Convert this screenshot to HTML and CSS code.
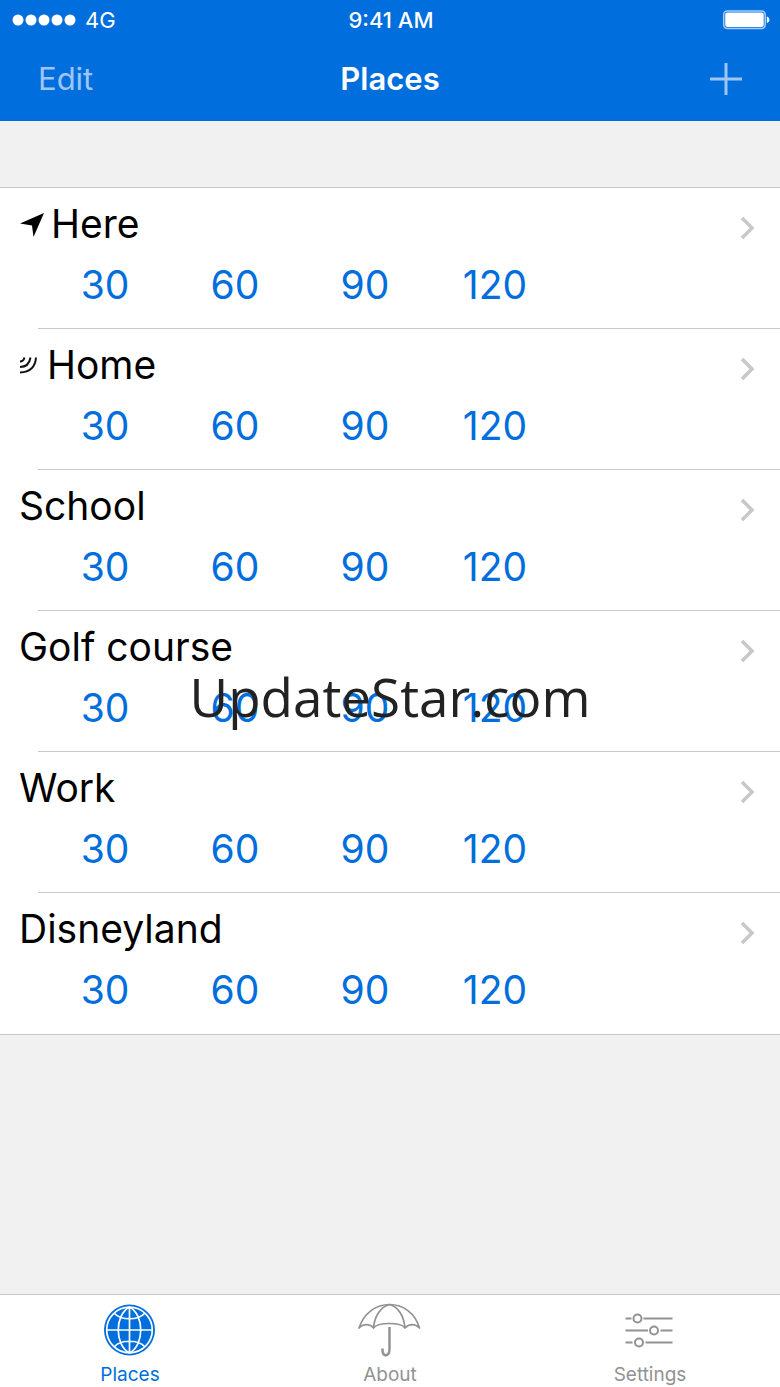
FILE: index.html
```html
<!DOCTYPE html>
<html lang="en">
<head>
  <meta charset="UTF-8" />
  <meta name="viewport" content="width=device-width, initial-scale=1.0"/>
  <title>Places</title>
  <link rel="stylesheet" href="styles.css">
</head>
<body>
  <header>
    <div class="status">
      <div class="signal">
        <svg width="64" height="12" viewBox="0 0 64 12" fill="#fff" aria-hidden="true">
          <circle cx="6" cy="6" r="5.5"/><circle cx="19" cy="6" r="5.5"/><circle cx="32" cy="6" r="5.5"/><circle cx="45" cy="6" r="5.5"/><circle cx="58" cy="6" r="5.5"/>
        </svg>
        <span>4G</span>
      </div>
      <span class="time">9:41 AM</span>
      <svg class="battery" width="48" height="20" viewBox="0 0 48 20" aria-hidden="true">
        <rect x="1.7" y="1" width="41.5" height="17.5" rx="3.5" fill="none" stroke="#a9cdf7" stroke-width="1.5"/>
        <rect x="3.2" y="2.5" width="38.5" height="14.5" rx="2" fill="#fff"/>
        <path d="M44.8 6.500v6.500c3.500-1 3.500-5.500 0-6.500z" fill="#fff"/>
      </svg>
    </div>
    <nav class="navbar">
      <button type="button" class="edit">Edit</button>
      <h1>Places</h1>
      <button type="button" class="add" aria-label="Add place">
        <svg width="32" height="32" viewBox="0 0 32 32" stroke="#9fc5f8" stroke-width="3"><path d="M16 0v32M0 16h32"/></svg>
      </button>
    </nav>
  </header>

  <main>
    <ul class="places" id="places"></ul>
    <div class="watermark">UpdateStar.com</div>
  </main>

  <nav class="tabs">
    <a href="#places" class="tab active">
      <svg width="64" height="54" viewBox="0 0 64 54" fill="none" aria-hidden="true">
        <circle cx="31.5" cy="27" r="25.500" fill="#006edc"/>
        <g stroke="#fff" stroke-width="1.7">
          <circle cx="31.5" cy="27" r="22.800"/>
          <path d="M31.500 4v46M8.500 27h46M31.500 4C16.500 12 16.500 42 31.500 50M31.500 4C46.500 12 46.500 42 31.500 50M16.500 10.500C23 17.500 40 17.500 46.500 10.500M16.500 43.500C23 36.500 40 36.500 46.500 43.500"/>
        </g>
      </svg>
      <span>Places</span>
    </a>
    <a href="#about" class="tab">
      <svg width="64" height="54" viewBox="0 0 64 54" fill="none" stroke="#929292" stroke-width="1.700" stroke-linejoin="round" aria-hidden="true">
        <path d="M1 25C6 10 18 1.500 31.500 1.500S57 10 61.500 25c-4-4.500-10.500-4.500-14.500 0-4-6-27-6-31.500 0-3.500-4.500-10.500-4.500-14.500 0z"/>
        <path d="M15.500 25C16.500 13 22.500 4 31.500 1.500c9 2.500 14.500 11.500 15.500 23.500"/>
        <path d="M31.500 24v22c0 8-7 8-7 1.500v-2" stroke-width="2.500"/>
      </svg>
      <span>About</span>
    </a>
    <a href="#settings" class="tab">
      <svg width="64" height="54" viewBox="0 0 64 54" fill="none" stroke="#929292" stroke-width="2" aria-hidden="true">
        <path d="M7.500 15.500h6M25.500 15.500h29M7.500 27.500h22.500M42.500 27.500h12M7.500 39.500h7M27.500 39.500h27"/>
        <circle cx="19.500" cy="15.500" r="4"/><circle cx="36" cy="27.500" r="4"/><circle cx="21" cy="39.500" r="4"/>
      </svg>
      <span>Settings</span>
    </a>
  </nav>

  <script>
    const arrow = '<svg class="arrow" width="26" height="26" viewBox="0 0 26 26" aria-hidden="true"><path d="M1 12.500L25 2 14.500 26 13 14.500z"/></svg>';
    const waves = '<svg class="waves" width="18" height="18" viewBox="0 0 18 18" fill="none" stroke="#111" stroke-width="2" aria-hidden="true"><path d="M1 5.500Q4.500 5.500 5.500 1.500M1 11Q10 11 11.500 1.500M1 16.500Q16 16 17 1.500"/></svg>';

    const places = [
      { name: 'Here', icon: arrow },
      { name: 'Home', icon: waves },
      { name: 'School', icon: '' },
      { name: 'Golf course', icon: '' },
      { name: 'Work', icon: '' },
      { name: 'Disneyland', icon: '' }
    ];
    const minutes = [30, 60, 90, 120];

    document.getElementById('places').innerHTML = places.map(place => `
      <li class="place">
        <h2>${place.icon}<span>${place.name}</span></h2>
        <div class="times">
          ${minutes.map(m => `<button type="button">${m}</button>`).join('')}
        </div>
        <svg class="chevron" width="16" height="24" viewBox="0 0 16 24" fill="none" stroke="#c7c7cc" stroke-width="3.500" aria-hidden="true"><path d="M2 2l10 10L2 22"/></svg>
      </li>`).join('');
  </script>
</body>
</html>
```
FILE: styles.css
```css
* {
  box-sizing: border-box;
}

body {
  font-family: Inter, 'Liberation Sans', sans-serif;
  background: #f1f1f1;
  margin: 0;
  color: #000;
  min-height: 100vh;
  display: flex;
  flex-direction: column;
}

button {
  background: none;
  border: none;
  padding: 0;
  font: inherit;
  color: inherit;
  cursor: pointer;
}

svg {
  display: block;
  flex: none;
}

header {
  background: #006edc;
  color: #fff;
}

.status {
  display: grid;
  grid-template-columns: 1fr auto 1fr;
  align-items: center;
  height: 40px;
  padding: 0 10px 0 12px;
  font-size: 22px;
}

.signal {
  display: flex;
  align-items: center;
  gap: 9px;
}

.time {
  font-weight: 500;
}

.battery {
  justify-self: end;
}

.navbar {
  display: grid;
  grid-template-columns: 1fr auto 1fr;
  align-items: center;
  height: 81px;
  padding: 0 38px 4px;
}

.edit {
  justify-self: start;
  font-size: 31px;
  color: #9fc5f8;
}

h1 {
  margin: 0;
  font-size: 31px;
  font-weight: 600;
}

.add {
  justify-self: end;
}

main {
  flex: 1;
  position: relative;
  padding-top: 66px;
}

.places {
  list-style: none;
  margin: 0;
  padding: 0;
  background: #fff;
  border-top: 1px solid #c8c7cc;
  border-bottom: 1px solid #c8c7cc;
}

.place {
  display: grid;
  grid-template-columns: 1fr auto;
  grid-template-rows: 71px 70px;
  padding: 0 24px 0 19px;
  background: linear-gradient(#c8c7cc, #c8c7cc) 38px 100% / 100% 1px no-repeat;
}

.place:last-child {
  background: none;
}

h2 {
  display: flex;
  align-items: center;
  margin: 0;
  font-size: 39px;
  font-weight: 400;
}

.arrow {
  margin-right: 6px;
}

.waves {
  margin-right: 10px;
}

.times {
  grid-row: 2;
  grid-column: 1 / 3;
  display: flex;
  padding-left: 21px;
}

.times button {
  width: 130px;
  height: 50px;
  font-size: 39px;
  color: #006edc;
}

.chevron {
  grid-row: 1;
  grid-column: 2;
  align-self: center;
  margin-top: 8px;
}

.watermark {
  position: absolute;
  top: 536px;
  left: 0;
  right: 0;
  text-align: center;
  font-family: 'Open Sans', 'Noto Sans', sans-serif;
  font-size: 53px;
  line-height: 80px;
  color: #222;
  pointer-events: none;
}

.tabs {
  display: flex;
  height: 93px;
  background: #fff;
  border-top: 1px solid #c8c7cc;
}

.tab {
  flex: 1;
  display: flex;
  flex-direction: column;
  align-items: center;
  gap: 6px;
  padding-top: 8px;
  font-size: 19px;
  line-height: 24px;
  color: #929292;
  text-decoration: none;
}

.tab.active {
  color: #006edc;
}
```
